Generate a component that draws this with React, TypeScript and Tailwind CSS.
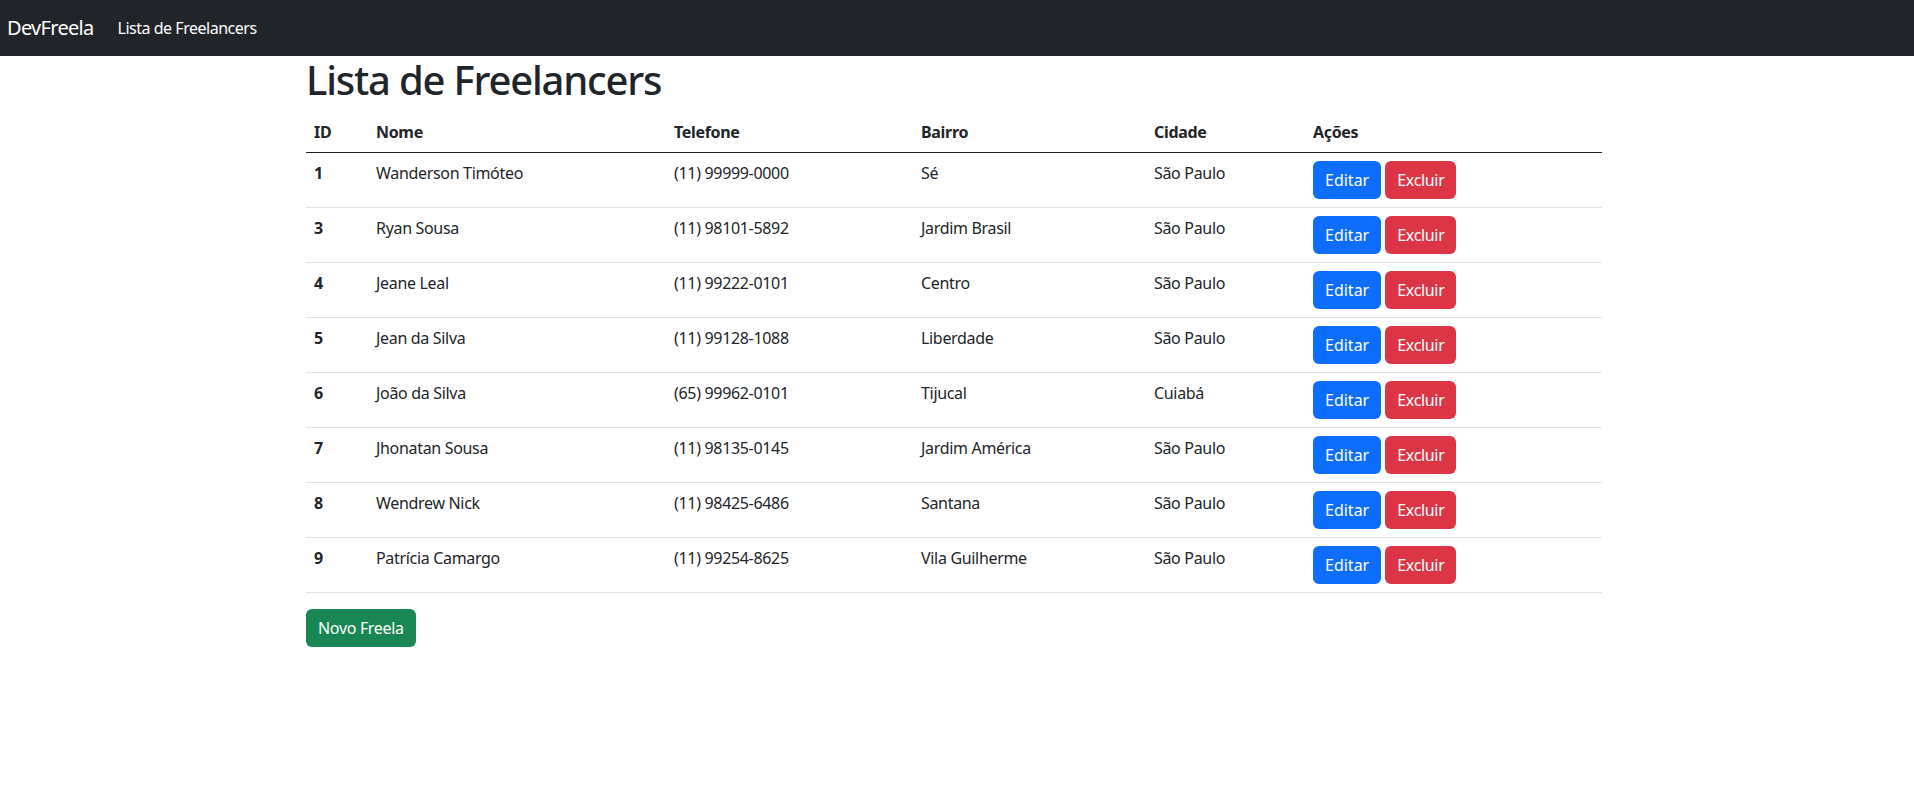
const freelancers = [
  { id: 1, nome: "Wanderson Timóteo", telefone: "(11) 99999-0000", bairro: "Sé", cidade: "São Paulo" },
  { id: 3, nome: "Ryan Sousa", telefone: "(11) 98101-5892", bairro: "Jardim Brasil", cidade: "São Paulo" },
  { id: 4, nome: "Jeane Leal", telefone: "(11) 99222-0101", bairro: "Centro", cidade: "São Paulo" },
  { id: 5, nome: "Jean da Silva", telefone: "(11) 99128-1088", bairro: "Liberdade", cidade: "São Paulo" },
  { id: 6, nome: "João da Silva", telefone: "(65) 99962-0101", bairro: "Tijucal", cidade: "Cuiabá" },
  { id: 7, nome: "Jhonatan Sousa", telefone: "(11) 98135-0145", bairro: "Jardim América", cidade: "São Paulo" },
  { id: 8, nome: "Wendrew Nick", telefone: "(11) 98425-6486", bairro: "Santana", cidade: "São Paulo" },
  { id: 9, nome: "Patrícia Camargo", telefone: "(11) 99254-8625", bairro: "Vila Guilherme", cidade: "São Paulo" },
];

function Navbar() {
  return (
    <nav className="flex h-14 items-center bg-[#212529] pl-[7px]">
      <a href="#" className="mr-4 text-[20px] leading-[30px] tracking-[-0.035em] text-white">
        DevFreela
      </a>
      <a href="#" className="px-2 text-base leading-6 tracking-[-0.03em] text-white">
        Lista de Freelancers
      </a>
    </nav>
  );
}

export default function App() {
  return (
    <div className="min-h-screen bg-white font-['Noto_Sans',sans-serif] text-base leading-6 text-[#212529]">
      <Navbar />
      <main className="ml-[306px] w-[1296px]">
        <h1 className="mb-2 text-[40px] leading-[48px] font-medium tracking-[-0.03em]">
          Lista de Freelancers
        </h1>
        <table className="mb-4 w-full table-fixed border-collapse text-left tracking-[-0.02em]">
          <thead>
            <tr className="border-b border-[#212529]">
              <th className="w-[62px] p-2 font-bold">ID</th>
              <th className="w-[298px] p-2 font-bold">Nome</th>
              <th className="w-[247px] p-2 font-bold">Telefone</th>
              <th className="w-[233px] p-2 font-bold">Bairro</th>
              <th className="w-[159px] p-2 font-bold">Cidade</th>
              <th className="p-2 font-bold">Ações</th>
            </tr>
          </thead>
          <tbody>
            {freelancers.map((f) => (
              <tr key={f.id} className="border-b border-[#dee2e6] align-top">
                <th scope="row" className="p-2 font-bold">
                  {f.id}
                </th>
                <td className="p-2">{f.nome}</td>
                <td className="p-2">{f.telefone}</td>
                <td className="p-2">{f.bairro}</td>
                <td className="p-2">{f.cidade}</td>
                <td className="p-2">
                  <div className="flex gap-1 tracking-normal">
                    <button className="h-[38px] rounded-md bg-[#0d6efd] px-3 text-white">
                      Editar
                    </button>
                    <button className="h-[38px] rounded-md bg-[#dc3545] px-3 tracking-[-0.02em] text-white">
                      Excluir
                    </button>
                  </div>
                </td>
              </tr>
            ))}
          </tbody>
        </table>
        <button className="h-[38px] rounded-md bg-[#198754] px-3 tracking-[-0.02em] text-white">
          Novo Freela
        </button>
      </main>
    </div>
  );
}
